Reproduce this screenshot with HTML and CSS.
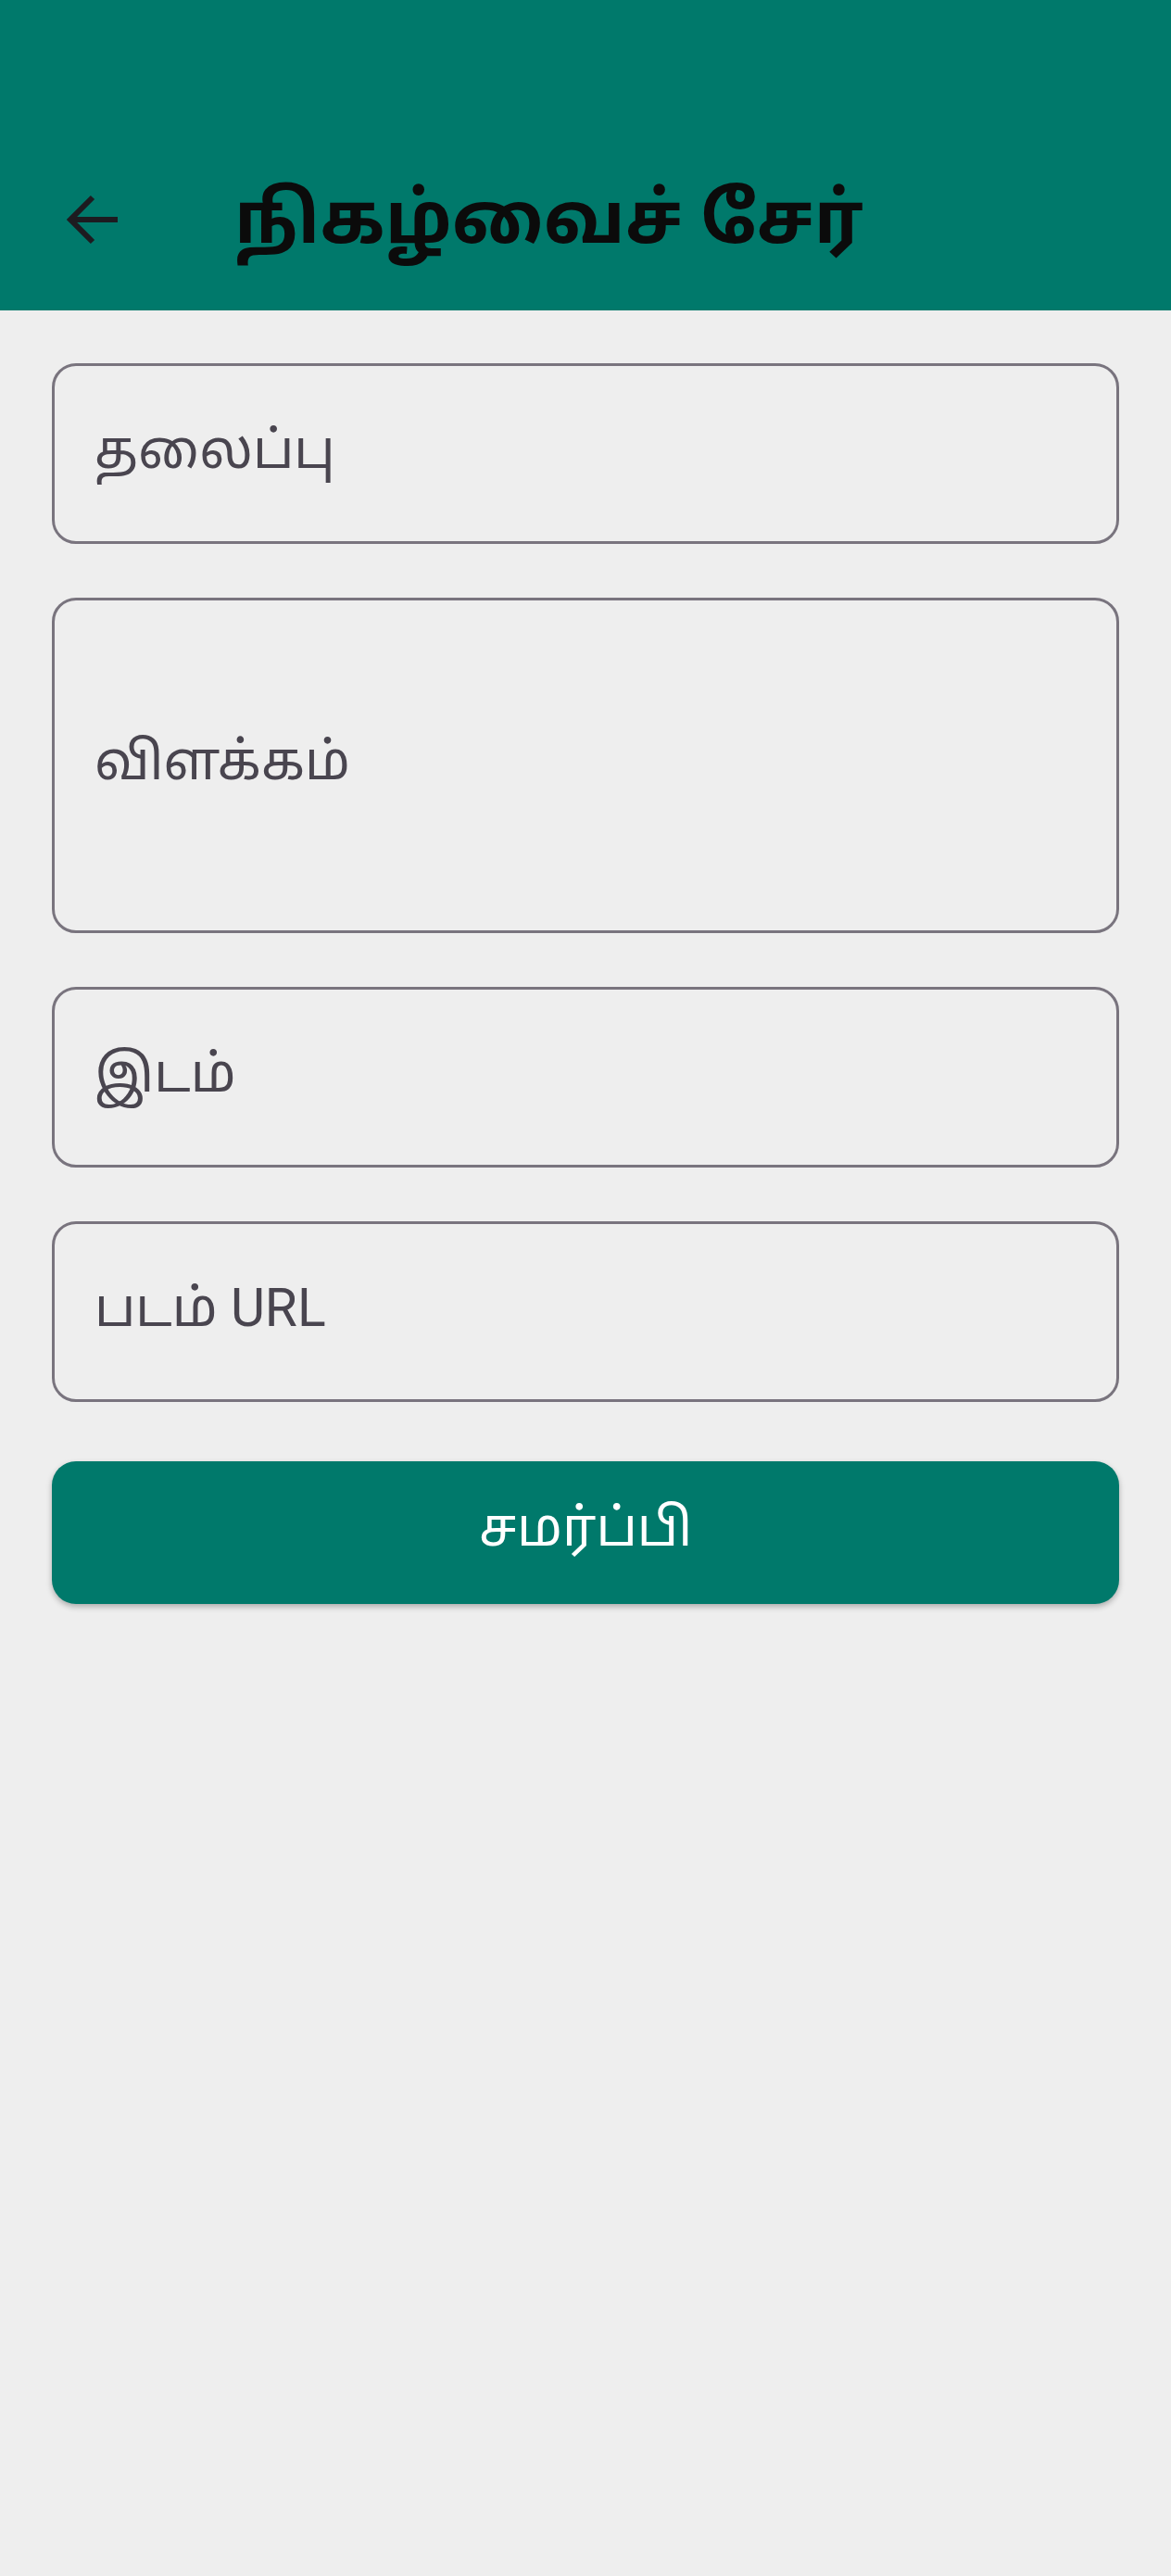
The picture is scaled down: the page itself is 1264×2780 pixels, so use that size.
FILE: index.html
```html
<!DOCTYPE html>
<html lang="ta">
<head>
<meta charset="utf-8">
<title>நிகழ்வைச் சேர்</title>
<link rel="stylesheet" href="styles.css">
</head>
<body>
<header class="appbar">
  <button class="back" aria-label="back">
    <svg width="58" height="56" viewBox="0 0 58 56"><path d="M57 28H6M30 4L6 28L30 52" fill="none" stroke="#1d1b20" stroke-width="6"/></svg>
  </button>
  <h1 class="title">நிகழ்வைச் சேர்</h1>
</header>
<main class="form">
  <div class="field"><span class="label">தலைப்பு</span></div>
  <div class="field field-tall"><span class="label">விளக்கம்</span></div>
  <div class="field"><span class="label">இடம்</span></div>
  <div class="field"><span class="label">படம் URL</span></div>
  <button class="submit">சமர்ப்பி</button>
</main>
</body>
</html>
```
FILE: styles.css
```css
html, body {
  margin: 0;
  padding: 0;
}
body {
  background: #eeeeee;
  font-family: Roboto, "Noto Sans Tamil", "Noto Sans", sans-serif;
  width: 1264px;
  min-height: 2780px;
}
.appbar {
  box-sizing: border-box;
  height: 335px;
  padding: 138px 0 0 70px;
  background: #00796b;
  display: flex;
  align-items: center;
}
.back {
  background: none;
  border: 0;
  padding: 0;
  margin: 0;
  display: flex;
  width: 58px;
  height: 56px;
}
.title {
  margin: 0 0 0 125px;
  font-size: 77px;
  font-weight: 700;
  color: #0b0b0b;
  line-height: 1;
}
.form {
  padding: 57px 56px;
  display: flex;
  flex-direction: column;
  gap: 58px;
}
.field {
  box-sizing: border-box;
  height: 195px;
  border: 3px solid #79747e;
  border-radius: 26px;
  display: flex;
  align-items: center;
  padding: 0 0 9px 43px;
}
.field-tall {
  height: 362px;
}
.label {
  font-size: 57px;
  color: #49454f;
  line-height: 1;
}
.submit {
  margin-top: 6px;
  height: 154px;
  padding: 0 0 12px;
  border: 0;
  border-radius: 26px;
  background: #00796b;
  color: #ffffff;
  font-family: inherit;
  font-size: 57px;
  line-height: 1;
  box-shadow: 0 3px 6px rgba(0, 0, 0, 0.28);
}
```
